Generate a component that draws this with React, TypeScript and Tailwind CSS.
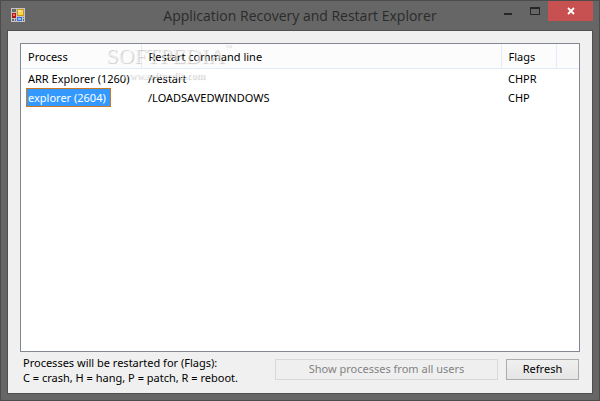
import { useState } from 'react';

type ProcessRow = { name: string; command: string; flags: string };

const processes: ProcessRow[] = [
  { name: 'ARR Explorer (1260)', command: '/restart', flags: 'CHPR' },
  { name: 'explorer (2604)', command: '/LOADSAVEDWINDOWS', flags: 'CHP' },
];

function AppIcon() {
  return (
    <svg width="14" height="14" viewBox="0 0 14 14" shapeRendering="crispEdges" aria-hidden="true">
      <rect width="14" height="14" fill="#c4c4c4" />
      <rect x="1" y="1" width="4" height="3" fill="#6a6a6a" />
      <rect x="6" y="1" width="7" height="7" fill="#c9971c" />
      <rect x="7" y="2" width="5" height="5" fill="#ffd54a" />
      <rect x="7" y="2" width="3" height="2" fill="#ffeb9c" />
      <rect x="1" y="5" width="4" height="5" fill="#b0160f" />
      <rect x="2" y="6" width="2" height="2" fill="#f0776c" />
      <rect x="6" y="9" width="5" height="4" fill="#3a6fd8" />
      <rect x="7" y="10" width="3" height="2" fill="#8fb8ff" />
      <rect x="12" y="9" width="1" height="1" fill="#6a6a6a" />
      <rect x="12" y="11" width="1" height="2" fill="#6a6a6a" />
      <rect x="1" y="11" width="2" height="2" fill="#6a6a6a" />
      <rect x="4" y="11" width="1" height="2" fill="#6a6a6a" />
    </svg>
  );
}

function TitleBar() {
  return (
    <header className="grid h-[29px] grid-cols-[1fr_auto_1fr] items-start">
      <div className="pl-1 pt-[7px]">
        <AppIcon />
      </div>
      <h1 className="pt-[5px] font-['Open_Sans','Noto_Sans',sans-serif] text-[14px] leading-5 text-[#2b2b2b]">
        Application Recovery and Restart Explorer
      </h1>
      <div className="flex h-5 justify-end">
        <button aria-label="Minimize" className="flex w-[27px] justify-center">
          <svg width="8" height="20" viewBox="0 0 8 20" shapeRendering="crispEdges">
            <rect y="12" width="8" height="2" fill="#262626" />
          </svg>
        </button>
        <button aria-label="Maximize" className="flex w-[27px] justify-center">
          <svg width="10" height="20" viewBox="0 0 10 20" shapeRendering="crispEdges">
            <path d="M0 6h10v8H0zM1 8v5h8V8z" fill="#262626" fillRule="evenodd" />
          </svg>
        </button>
        <button aria-label="Close" className="flex w-[45px] items-center justify-center bg-[#c75050]">
          <svg width="8" height="8" viewBox="0 0 8 8">
            <path d="M1 1l6 6M7 1L1 7" stroke="#fff" strokeWidth="1.8" />
          </svg>
        </button>
      </div>
    </header>
  );
}

function Watermark() {
  return (
    <div
      aria-hidden="true"
      className="pointer-events-none absolute left-[85px] top-0 font-['Liberation_Serif',serif] text-white/60 [text-shadow:1px_1px_1px_rgb(0_0_0/0.2)]"
    >
      <div className="flex items-start">
        <span className="text-[22px] leading-6">SOFTPEDIA</span>
        <span className="text-[7px] leading-none">™</span>
      </div>
      <div className="pl-4 text-[10px] font-bold leading-4">www.softpedia.com</div>
    </div>
  );
}

export default function App() {
  const [selected, setSelected] = useState('explorer (2604)');

  return (
    <div className="flex min-h-screen flex-col border border-[#4c4c4c] bg-[#666666] px-[6px] pb-[6px] font-['Noto_Sans','Open_Sans',sans-serif] text-[11px] text-black">
      <TitleBar />
      <main className="flex flex-1 flex-col border border-[#505050] bg-[#f0f0f0] px-3 pb-2 pt-3">
        <div className="relative flex-1 border border-[#828790] bg-white">
          <table className="w-full table-fixed border-collapse text-left">
            <colgroup>
              <col className="w-[120px]" />
              <col />
              <col className="w-[55px]" />
              <col className="w-[23px]" />
            </colgroup>
            <thead>
              <tr className="h-6 border-b border-[#e3edfa] bg-[#fcfcfc]">
                <th className="border-r border-[#e3edfa] px-[7px] pb-0 pt-[3px] font-normal">Process</th>
                <th className="border-r border-[#e3edfa] px-[7px] pb-0 pt-[3px] font-normal">Restart command line</th>
                <th className="border-r border-[#e3edfa] px-[7px] pb-0 pt-[3px] font-normal">Flags</th>
                <th />
              </tr>
            </thead>
            <tbody>
              {processes.map((row) => (
                <tr key={row.name} className="h-[19px] leading-[17px]">
                  <td className="whitespace-nowrap py-0 pl-[5px]">
                    <button
                      onClick={() => setSelected(row.name)}
                      className={`block border pl-px ${
                        selected === row.name
                          ? 'border-[#cc7722] bg-[#3399ff] pr-[4px] text-white'
                          : 'border-transparent'
                      }`}
                    >
                      {row.name}
                    </button>
                  </td>
                  <td className="px-[7px] py-0">{row.command}</td>
                  <td className="whitespace-nowrap py-0 pl-[7px]">{row.flags}</td>
                  <td />
                </tr>
              ))}
            </tbody>
          </table>
          <Watermark />
        </div>
        <footer className="flex items-start gap-2 pr-px pt-[3px]">
          <p className="flex-1 whitespace-nowrap pl-[3px] leading-[15px]">
            Processes will be restarted for (Flags):
            <br />C = crash, H = hang, P = patch, R = reboot.
          </p>
          <button disabled className="mt-1 h-[21px] w-[223px] border border-[#d9d9d9] bg-[#efefef] text-[#838383]">
            Show processes from all users
          </button>
          <button className="mt-1 h-[21px] w-[73px] border border-[#acacac] bg-linear-to-b from-[#f0f0f0] to-[#e5e5e5]">
            Refresh
          </button>
        </footer>
      </main>
    </div>
  );
}
